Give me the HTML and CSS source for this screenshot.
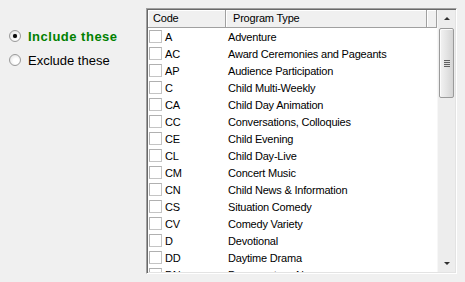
FILE: index.html
```html
<!DOCTYPE html>
<html lang="en">
<head>
    <meta charset="UTF-8">
    <meta name="viewport" content="width=device-width, initial-scale=1.0">
    <title>Program Types</title>
    <link rel="stylesheet" href="styles.css">
</head>
<body>
    <div class="page">
        <div class="filter">
            <label class="radio checked"><span class="dot"></span>Include these</label>
            <label class="radio"><span class="dot"></span>Exclude these</label>
        </div>
        <div class="listbox">
            <div class="list">
                <div class="head">
                    <div class="col-code">Code</div>
                    <div class="col-type">Program Type</div>
                    <div class="col-fill"></div>
                </div>
                <div class="rows">
                    <div class="row"><span class="box"></span><span class="code">A</span><span class="type">Adventure</span></div>
                    <div class="row"><span class="box"></span><span class="code">AC</span><span class="type">Award Ceremonies and Pageants</span></div>
                    <div class="row"><span class="box"></span><span class="code">AP</span><span class="type">Audience Participation</span></div>
                    <div class="row"><span class="box"></span><span class="code">C</span><span class="type">Child Multi-Weekly</span></div>
                    <div class="row"><span class="box"></span><span class="code">CA</span><span class="type">Child Day Animation</span></div>
                    <div class="row"><span class="box"></span><span class="code">CC</span><span class="type">Conversations, Colloquies</span></div>
                    <div class="row"><span class="box"></span><span class="code">CE</span><span class="type">Child Evening</span></div>
                    <div class="row"><span class="box"></span><span class="code">CL</span><span class="type">Child Day-Live</span></div>
                    <div class="row"><span class="box"></span><span class="code">CM</span><span class="type">Concert Music</span></div>
                    <div class="row"><span class="box"></span><span class="code">CN</span><span class="type">Child News &amp; Information</span></div>
                    <div class="row"><span class="box"></span><span class="code">CS</span><span class="type">Situation Comedy</span></div>
                    <div class="row"><span class="box"></span><span class="code">CV</span><span class="type">Comedy Variety</span></div>
                    <div class="row"><span class="box"></span><span class="code">D</span><span class="type">Devotional</span></div>
                    <div class="row"><span class="box"></span><span class="code">DD</span><span class="type">Daytime Drama</span></div>
                    <div class="row"><span class="box"></span><span class="code">DN</span><span class="type">Documentary, News</span></div>
                </div>
            </div>
            <div class="scroll">
                <div class="arrow up"></div>
                <div class="track">
                    <div class="thumb"><span class="grip"></span></div>
                </div>
                <div class="arrow down"></div>
            </div>
        </div>
    </div>
</body>
</html>
```

FILE: styles.css
```css
body {
    margin: 0;
    background-color: #f0f0f0;
    font-family: "Liberation Sans", Arial, sans-serif;
    color: #000000;
}
.page {
    display: flex;
    padding-top: 8px;
}
.filter {
    width: 146px;
    padding-top: 16px;
    display: flex;
    flex-direction: column;
}
.radio {
    display: flex;
    align-items: center;
    height: 24px;
    padding-left: 9px;
    font-size: 13px;
}
.radio.checked {
    color: #008000;
    font-weight: bold;
    letter-spacing: 0.5px;
}
.dot {
    width: 10px;
    height: 10px;
    margin-right: 7px;
    border: 1px solid #9a9a9a;
    border-radius: 50%;
    background: radial-gradient(circle at 60% 60%, #ffffff 30%, #dadada 100%);
    display: flex;
    justify-content: center;
    align-items: center;
}
.checked .dot::after {
    content: "";
    width: 4px;
    height: 4px;
    border-radius: 50%;
    background-color: #0a0a0a;
    box-shadow: 0 0 1px #444444;
}
.listbox {
    width: 311px;
    height: 266px;
    box-sizing: border-box;
    border: 1px solid;
    border-color: #a0a0a0 #ffffff #ffffff #a0a0a0;
    box-shadow: inset 1px 1px #696969, inset -1px -1px #e3e3e3;
    padding: 1px 1px 1px 1px;
    display: flex;
    background-color: #ffffff;
}
.list {
    flex: 1;
    overflow: hidden;
    font-size: 11px;
    letter-spacing: -0.2px;
}
.head {
    display: flex;
    height: 18px;
    background-color: #f0f0f0;
}
.head div {
    box-sizing: border-box;
    height: 18px;
    line-height: 17px;
    border-right: 1px solid #a0a0a0;
    border-bottom: 1px solid #a0a0a0;
    box-shadow: inset 1px 1px #ffffff;
}
.col-code {
    width: 78px;
    padding-left: 5px;
}
.col-type {
    width: 201px;
    padding-left: 7px;
}
.col-fill {
    flex: 1;
}
.row {
    display: flex;
    align-items: center;
    height: 17px;
    padding-left: 1px;
}
.box {
    width: 11px;
    height: 11px;
    border: 1px solid #c4c4c4;
    border-top-color: #b0b0b0;
    border-left-color: #b0b0b0;
    background-color: #ffffff;
    margin-right: 3px;
}
.code {
    width: 63px;
}
.scroll {
    width: 17px;
    display: flex;
    flex-direction: column;
    background-color: #ededed;
    border-left: 1px solid #f7f7f7;
}
.arrow {
    height: 17px;
    display: flex;
    justify-content: center;
    align-items: center;
}
.arrow::after {
    content: "";
    border-left: 3px solid transparent;
    border-right: 3px solid transparent;
}
.up::after {
    border-bottom: 3px solid #303030;
}
.down::after {
    border-top: 3px solid #303030;
}
.track {
    flex: 1;
    padding: 1px 1px 0 1px;
}
.thumb {
    height: 68px;
    border: 1px solid #9a9a9a;
    border-radius: 2px;
    background: linear-gradient(to right, #f3f3f3, #e4e4e4 50%, #d4d4d4);
    box-shadow: inset 1px 1px #fbfbfb;
    display: flex;
    justify-content: center;
    align-items: center;
}
.grip {
    width: 6px;
    height: 7px;
    background: repeating-linear-gradient(to bottom, #606060 0, #606060 1px, #dcdcdc 1px, #dcdcdc 2px);
}
```
